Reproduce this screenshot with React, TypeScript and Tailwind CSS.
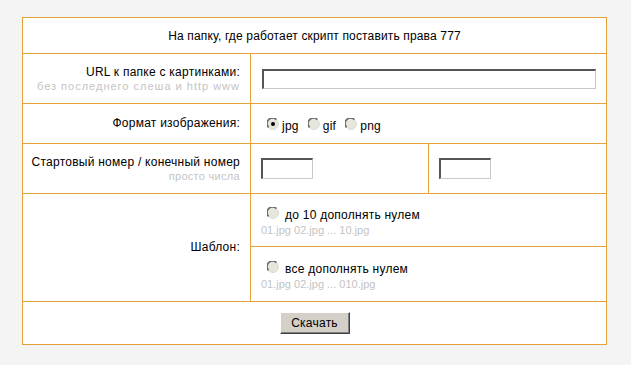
import React from "react";

const Radio = ({ checked = false }: { checked?: boolean }) => (
  <svg width="12" height="12" viewBox="0 0 12 12" className="shrink-0">
    <circle cx="6" cy="6" r="5.5" fill="#e6e6dc" stroke="#dcdcd4" strokeWidth="1" />
    <path d="M1.6 9.4 A4.8 4.8 0 0 1 9.4 1.6" fill="none" stroke="#6a6a6a" strokeWidth="1.6" />
    {checked && <circle cx="6" cy="6" r="2" fill="#000" />}
  </svg>
);

const Field = ({ className }: { className: string }) => (
  <div
    className={`bg-white border-t-2 border-l-2 border-b border-r border-t-[#555] border-l-[#555] border-b-[#c8c8c8] border-r-[#c8c8c8] ${className}`}
  />
);

const Label = ({ title, hint, wide }: { title: string; hint?: string; wide?: boolean }) => (
  <div className="w-[228px] shrink-0 border-r border-[#e4a33a] flex flex-col items-end justify-center pr-[10px]">
    <span className="text-[12px] leading-[15px] tracking-[0.25px] text-black">{title}</span>
    {hint && (
      <span className={`text-[11px] leading-[13px] text-[#c4c4c4] ${wide ? "tracking-[1px]" : "tracking-[0.3px]"}`}>
        {hint}
      </span>
    )}
  </div>
);

const TemplateOption = ({ title, sample, bordered }: { title: string; sample: string; bordered?: boolean }) => (
  <div className={`h-[53px] flex flex-col justify-center pl-[10px] ${bordered ? "border-b border-[#e4a33a]" : ""}`}>
    <div className="flex items-center gap-[6px] pl-[6px]">
      <Radio />
      <span className="text-[12px] leading-[15px] tracking-[0.25px] mt-[5px]">{title}</span>
    </div>
    <span className="text-[11px] leading-[13px] text-[#c4c4c4] mt-[1px]">{sample}</span>
  </div>
);

export default function App() {
  return (
    <div
      className="w-[631px] h-[365px] bg-[#f4f4f4] pt-[17px] pl-[22px]"
      style={{ fontFamily: '"Liberation Sans", Arial, sans-serif' }}
    >
      <div className="w-[585px] bg-white border border-[#e4a33a] text-black">
        <div className="h-[36px] border-b border-[#e4a33a] flex items-center justify-center text-[12px] tracking-[0.15px]">
          На папку, где работает скрипт поставить права 777
        </div>

        <div className="h-[50px] border-b border-[#e4a33a] flex">
          <Label title="URL к папке с картинками:" hint="без последнего слеша и http www" wide />
          <div className="flex-1 flex items-center pl-[11px] pr-[10px]">
            <Field className="w-[334px] h-[20px]" />
          </div>
        </div>

        <div className="h-[40px] border-b border-[#e4a33a] flex">
          <Label title="Формат изображения:" />
          <div className="flex-1 flex items-center pl-[16px] text-[12px] tracking-[0.25px]">
            <Radio checked />
            <span className="ml-[3px] mt-[5px]">jpg</span>
            <span className="ml-[9px]"><Radio /></span>
            <span className="ml-[3px] mt-[5px]">gif</span>
            <span className="ml-[9px]"><Radio /></span>
            <span className="ml-[3px] mt-[5px]">png</span>
          </div>
        </div>

        <div className="h-[50px] border-b border-[#e4a33a] flex">
          <Label title="Стартовый номер / конечный номер" hint="просто числа" />
          <div className="w-[178px] border-r border-[#e4a33a] flex items-center pl-[10px]">
            <Field className="w-[52px] h-[21px]" />
          </div>
          <div className="flex-1 flex items-center pl-[10px]">
            <Field className="w-[52px] h-[21px]" />
          </div>
        </div>

        <div className="h-[108px] border-b border-[#e4a33a] flex">
          <Label title="Шаблон:" />
          <div className="flex-1 flex flex-col">
            <TemplateOption title="до 10 дополнять нулем" sample="01.jpg 02.jpg ... 10.jpg" bordered />
            <TemplateOption title="все дополнять нулем" sample="01.jpg 02.jpg ... 010.jpg" />
          </div>
        </div>

        <div className="h-[42px] flex items-center justify-center">
          <button className="w-[70px] h-[22px] bg-[#d4d0c8] text-[12px] tracking-[0.25px] text-black border border-t-white border-l-white border-b-[#404040] border-r-[#404040] shadow-[inset_-1px_-1px_0_#808080]">
            Скачать
          </button>
        </div>
      </div>
    </div>
  );
}
